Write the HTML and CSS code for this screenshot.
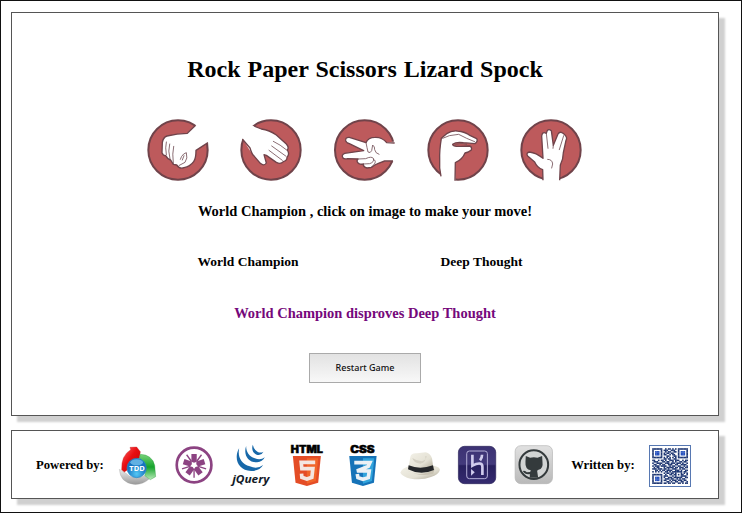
FILE: index.html
```html
<!DOCTYPE html>
<html lang="en">
<head>
<meta charset="utf-8">
<title>Rock Paper Scissors Lizard Spock</title>
<link rel="stylesheet" href="styles.css">
</head>
<body>
<main class="panel game">
  <h1 class="title">Rock Paper Scissors Lizard Spock</h1>
  <div class="moves">
    <svg class="hand" viewBox="19 24 192 192">
      <circle class="disc" cx="115" cy="120" r="89"/>
      <path class="gap" d="M140 71L168 46L220 40V96L205 98L169 121Z"/>
      <path class="skin" d="M168 46L143 70Q112 70 82 78Q70 82 68 98L67 128Q70 137 78 137Q84 148 93 150L101 163L111 165Q120 178 133 173Q151 170 162 155Q169 146 169 121L205 98"/>
      <path class="line" d="M80 96Q76 112 80 134M90 102Q84 122 91 147M102 109Q97 130 101 161M122 148Q124 139 132 132L140 128Q145 145 136 157L119 166M133 137L128 150"/>
    </svg>
    <svg class="hand" viewBox="299 24 192 192">
      <circle class="disc" cx="395" cy="120" r="89"/>
      <path class="gap" d="M344 49L298 26V86L310 87L334 125L390 80Z"/>
      <path class="skin" d="M344 48L366 57Q390 60 411 75L441 102Q450 112 444 120Q452 133 443 141Q444 152 432 155Q424 164 411 157L381 136L374 134L381 159Q374 170 363 160L345 139Q337 132 332 114L309 87"/>
      <path class="line" d="M402 94Q423 104 442 120M397 108L439 138M389 121L429 151"/>
    </svg>
    <svg class="hand" viewBox="127 24 192 192">
      <circle class="disc" cx="222" cy="120" r="89"/>
      <path class="gap" d="M288 98L325 92V160L304 153L279 154L260 120Z"/>
      <path class="skin" d="M312 99L288 98Q275 81 253 82Q232 82 226 98L176 82Q164 81 165 92Q166 98 176 101L219 122L162 130Q151 134 157 144Q160 148 171 146L202 147Q195 154 205 161Q210 164 218 162Q217 171 229 174L243 172Q252 164 263 160L282 153L307 153"/>
      <path class="line" d="M226 98Q229 113 232 126Q239 131 243 122L246 105Q253 110 252 119Q254 130 265 133M202 147L225 146Q242 138 248 145Q252 156 237 161L218 162M248 147Q259 153 250 164L241 172"/>
    </svg>
    <svg class="hand" viewBox="17 24 192 192">
      <circle class="disc" cx="113" cy="120" r="89"/>
      <path class="gap" d="M61 196L54 225H106L104 184Z"/>
      <path class="skin" d="M62 199Q56 174 58 149Q57 121 63 85L79 71Q94 61 111 63Q134 65 150 77L169 86Q174 94 164 101L129 98Q107 95 97 103Q98 110 121 109L147 108Q156 110 153 120Q145 127 134 129Q126 149 105 158L104 212"/>
      <path class="line" d="M67 85L87 77L115 73L139 85L163 95M102 106Q116 97 139 103"/>
    </svg>
    <svg class="hand" viewBox="299 24 192 192">
      <circle class="disc" cx="395" cy="120" r="89"/>
      <path class="gap" d="M371 184V220H421V184Z"/>
      <path class="skin" d="M371 211L370 179Q354 174 346 156L325 138Q319 129 330 126Q350 128 371 145L367 78Q369 63 381 70Q384 53 396 62L402 106L416 72Q422 62 433 71Q446 82 440 91L432 128Q432 146 423 165L421 211"/>
      <path class="line" d="M381 70L386 115M402 106L401 115M433 77L420 119M385 148Q399 148 400 162L397 174"/>
    </svg>
  </div>
  <p class="prompt">World Champion , click on image to make your move!</p>
  <div class="players"><span class="player">World Champion</span><span class="player">Deep Thought</span></div>
  <p class="result">World Champion disproves Deep Thought</p>
  <button class="restart" type="button">Restart Game</button>
</main>

<footer class="panel credits">
  <span class="label powered">Powered by:</span>
  <div class="logos">
    <svg class="logo" viewBox="24 27 120 126">
      <defs>
        <linearGradient id="red" x2="1" y2="1"><stop stop-color="#f66"/><stop offset=".45" stop-color="#e80e12"/><stop offset="1" stop-color="#b00"/></linearGradient>
        <linearGradient id="green" x2="0" y2="1"><stop stop-color="#7ad37c"/><stop offset=".5" stop-color="#14a32a"/><stop offset="1" stop-color="#b9ebb9"/></linearGradient>
        <linearGradient id="grey" x2="0" y2="1"><stop stop-color="#eee"/><stop offset="1" stop-color="#999"/></linearGradient>
        <radialGradient id="blue" cy=".8"><stop stop-color="#54c8f5"/><stop offset="1" stop-color="#1673c0"/></radialGradient>
      </defs>
      <path fill="url(#grey)" stroke="#999" d="M28 103L48 115Q65 134 102 122L117 132Q98 150 71 148Q31 143 28 103Z"/>
      <path fill="url(#red)" stroke="#b22" d="M35 104Q33 62 62 44L60 37L80 36L91 50L88 70Q53 76 53 104L43 111Z"/>
      <path fill="url(#green)" stroke="#16902a" d="M91 58Q126 59 134 91L137 125L121 134L104 122Q116 94 88 70Z"/>
      <circle cx="80" cy="99" r="29" fill="url(#blue)" stroke="#2586c5" stroke-width="2"/>
      <ellipse cx="80" cy="82" rx="19" ry="9" fill="#8bd1f4" opacity=".65"/>
      <text class="logo-text" x="58" y="107" font-size="21" textLength="46" lengthAdjust="spacingAndGlyphs" fill="#fff">TDD</text>
    </svg>
    <svg class="logo" viewBox="193.8 27 120 126">
      <circle cx="251" cy="90" r="52" fill="#fff" stroke="#8c4382" stroke-width="8"/>
      <g fill="#8c4382">
        <g id="petal"><path d="M243 57H259V80L251 83L243 80Z"/><path d="M249 103h4v25h-4z"/></g>
        <use href="#petal" transform="rotate(72 251 90)"/><use href="#petal" transform="rotate(144 251 90)"/><use href="#petal" transform="rotate(216 251 90)"/><use href="#petal" transform="rotate(288 251 90)"/>
      </g>
    </svg>
    <svg class="logo" viewBox="363.6 27 120 126">
      <g fill="#1768a9">
        <path d="M388 40C371 69 384 107 424 108Q449 108 460 90Q442 104 420 94C394 86 383 65 388 40Z"/>
        <path d="M409 33C400 59 415 84 442 82Q458 80 465 67Q452 77 435 70C418 65 409 51 409 33Z"/>
        <path d="M429 29C423 47 433 60 447 60Q457 59 461 50Q452 55 443 50Q432 45 429 29Z"/>
      </g>
      <text class="logo-text italic" x="367" y="145" font-size="31" textLength="112" lengthAdjust="spacingAndGlyphs" fill="#131b28">jQuery</text>
    </svg>
    <svg class="logo" viewBox="23.4 27 120 126">
      <text class="logo-text heavy" x="32" y="53" font-size="29" textLength="96" lengthAdjust="spacingAndGlyphs">HTML</text>
      <path fill="#e44d26" d="M38 63H122L114 143L80 153L46 143Z"/><path fill="#f16529" d="M80 70H114L107 138L80 146Z"/>
      <path fill="none" stroke="#f4e6e0" stroke-width="11" d="M105 82H63L65 101H98L95 127L80 132L65 127L64 116"/>
    </svg>
    <svg class="logo" viewBox="193.2 27 120 126">
      <text class="logo-text heavy" x="212" y="53" font-size="29" textLength="73" lengthAdjust="spacingAndGlyphs">CSS</text>
      <path fill="#1673b8" d="M209 63H291L283 143L250 153L217 143Z"/><path fill="#31a4dc" d="M250 70H284L277 138L250 146Z"/>
      <path fill="none" stroke="#ebf1f5" stroke-width="11" d="M224 83H271L266 94L232 108H269L266 128L250 133L235 128L233 117"/>
    </svg>
    <svg class="logo" viewBox="363 27 120 126">
      <defs><linearGradient id="straw" x2="1" y2="1"><stop stop-color="#f3f1e8"/><stop offset=".6" stop-color="#e4e1d4"/><stop offset="1" stop-color="#aaa391"/></linearGradient></defs>
      <path fill="url(#straw)" d="M361 113Q364 100 390 92H462Q483 97 479 107Q475 118 453 126Q426 137 392 131Q368 125 361 113Z"/>
      <path fill="#c9c3b3" d="M380 105Q420 130 464 102L460 116Q418 128 380 105Z"/>
      <path fill="url(#straw)" d="M386 94L391 66Q394 53 411 55L437 52Q451 55 456 70L460 98Q424 116 386 94Z"/>
      <path fill="#d4d0c3" d="M397 69Q411 79 426 79Q438 76 440 64L436 63Q440 83 421 86Q401 84 397 69Z"/>
      <path fill="#25272a" d="M386 91Q420 105 459 91L462 105Q422 123 384 103Z"/>
    </svg>
    <svg class="logo" viewBox="22.8 27 120 126">
      <defs><linearGradient id="violet" x2="0" y2="1"><stop stop-color="#3c3273"/><stop offset=".48" stop-color="#433a7c"/><stop offset=".52" stop-color="#28205e"/><stop offset="1" stop-color="#352b70"/></linearGradient></defs>
      <rect x="24" y="34" width="112" height="112" rx="18" fill="url(#violet)" stroke="#282158" stroke-width="2"/>
      <rect x="49" y="48" width="62" height="83" rx="8" fill="none" stroke="#b4afd8" stroke-width="3"/>
      <path fill="none" stroke="#d1cced" stroke-width="8" d="M66 59V92Q81 84 90 86Q96 87 96 96V120M95 59Q95 69 89 76"/>
      <path fill="#d1cced" d="M62 102L73 112L62 122Z"/>
    </svg>
    <svg class="logo" viewBox="192.6 27 120 126">
      <defs><linearGradient id="steel" x2="0" y2="1"><stop stop-color="#e1e1e1"/><stop offset="1" stop-color="#b9b9b9"/></linearGradient></defs>
      <rect x="196" y="32" width="112" height="114" rx="17" fill="url(#steel)" stroke="#b4b4b4" stroke-width="2"/>
      <circle cx="252" cy="89" r="43" fill="#d2d4d4" stroke="#343a3c" stroke-width="6"/>
      <path fill="#343a3c" d="M228 63L241 68Q252 65 263 68L277 63L278 80Q281 101 266 104L262 107L265 128H240V117Q226 120 219 108Q227 106 231 112L241 111L243 106Q225 102 227 80Z"/>
    </svg>
  </div>
  <span class="label written">Written by:</span>
  <svg class="qr" viewBox="0 0 42 42"><rect x=".5" y=".5" width="41" height="41" fill="#fff" stroke="#5778b2"/><g id="qr-cells" fill="#1d3672" transform="translate(3.2 3.2) scale(1.424)"></g></svg>
</footer>
<script src="qr.js"></script>
</body>
</html>
```
FILE: styles.css
```css
* { box-sizing: border-box; }
html, body { height: 100%; }
body {
  margin: 0;
  padding: 11px 22px 0 10px;
  border: 1px solid #111;
  background: #fff;
  color: #000;
  font-family: "Liberation Serif", "Times New Roman", serif;
  font-weight: bold;
  overflow: hidden;
}
.panel { border: 1px solid #555; background: #fff; box-shadow: 6px 6px 2px #d0d0d0; }
.game { height: 404px; display: flex; flex-direction: column; align-items: center; }
.title { margin: 41px 0 0; font-size: 24px; line-height: 30px; word-spacing: 1px; white-space: nowrap; }
.moves { display: flex; gap: 29.2px; margin-top: 34px; padding-right: 1px; }
.hand { width: 64px; height: 64px; display: block; overflow: visible; }
.disc { fill: #bd5a5c; stroke: #70434a; stroke-width: 6; }
.gap { fill: #fff; }
.skin { fill: #fff; stroke: #70434a; stroke-width: 4; stroke-linejoin: round; }
.line { fill: none; stroke: #735158; stroke-width: 2.5; stroke-linecap: round; stroke-linejoin: round; }
.prompt, .result { margin: 0; font-size: 14.48px; line-height: 20px; white-space: nowrap; }
.prompt { margin-top: 19px; }
.players { display: flex; justify-content: space-between; width: 335px; padding-right: 10px; margin-top: 31px; font-size: 13.5px; line-height: 20px; }
.result { margin-top: 31px; color: #75087b; }
.restart {
  width: 112px; height: 30px; margin-top: 30px; padding: 0 0 2px;
  border: 1px solid #aaa; border-radius: 0;
  background: linear-gradient(#e2e2e2, #f8f8f8);
  color: #111; font: 500 9px "Noto Sans", sans-serif;
}
.credits { display: flex; align-items: center; height: 69px; margin-top: 14px; padding-left: 24px; }
.label { font-size: 12.7px; line-height: 18px; white-space: nowrap; }
.powered { width: 82px; }
.logos { display: flex; gap: 16.6px; }
.logo { width: 40px; height: 42px; display: block; overflow: visible; }
.logo-text { font-family: "Noto Sans", sans-serif; font-weight: bold; }
.italic { font-style: italic; }
.heavy { font-family: Inter, sans-serif; font-weight: 900; stroke: #000; stroke-width: 1.5px; }
.written { width: 78px; margin-left: 17px; }
.qr { width: 42px; height: 42px; margin-top: 2px; }
```
FILE: qr.js
```js
const rows = [
  "1111111001011010101111111",
  "1000001011100111001000001",
  "1011101001011001101011101",
  "1011101010110110001011101",
  "1011101011001011001011101",
  "1000001000110001101000001",
  "1111111010101010101111111",
  "0000000011011001100000000",
  "1100101101001110111001011",
  "0111000110110010100110110",
  "1001111001110111011101001",
  "0110010110011100110011110",
  "1011101111001011001100101",
  "0101100010111110110111011",
  "1110111011010011100101100",
  "0011010110111100111010011",
  "1010101001101011111110110",
  "0000000010110110100010101",
  "1111111001001101101011001",
  "1000001011100010100011110",
  "1011101010011101111110011",
  "1011101001110110010101100",
  "1011101011001011101110110",
  "1000001000110100110011001",
  "1111111011011011001101011"
];
const cells = document.getElementById("qr-cells");
rows.forEach((row, y) => [...row].forEach((bit, x) => {
  if (bit === "0") return;
  const cell = document.createElementNS("http://www.w3.org/2000/svg", "rect");
  cell.setAttribute("x", x);
  cell.setAttribute("y", y);
  cell.setAttribute("width", 1.12);
  cell.setAttribute("height", 1.12);
  const core = (x > 1 && x < 5 && (y > 1 && y < 5 || y > 19 && y < 23)) || (x > 19 && x < 23 && y > 1 && y < 5);
  if (core) cell.setAttribute("fill", "#2450bd");
  cells.appendChild(cell);
}));
```
